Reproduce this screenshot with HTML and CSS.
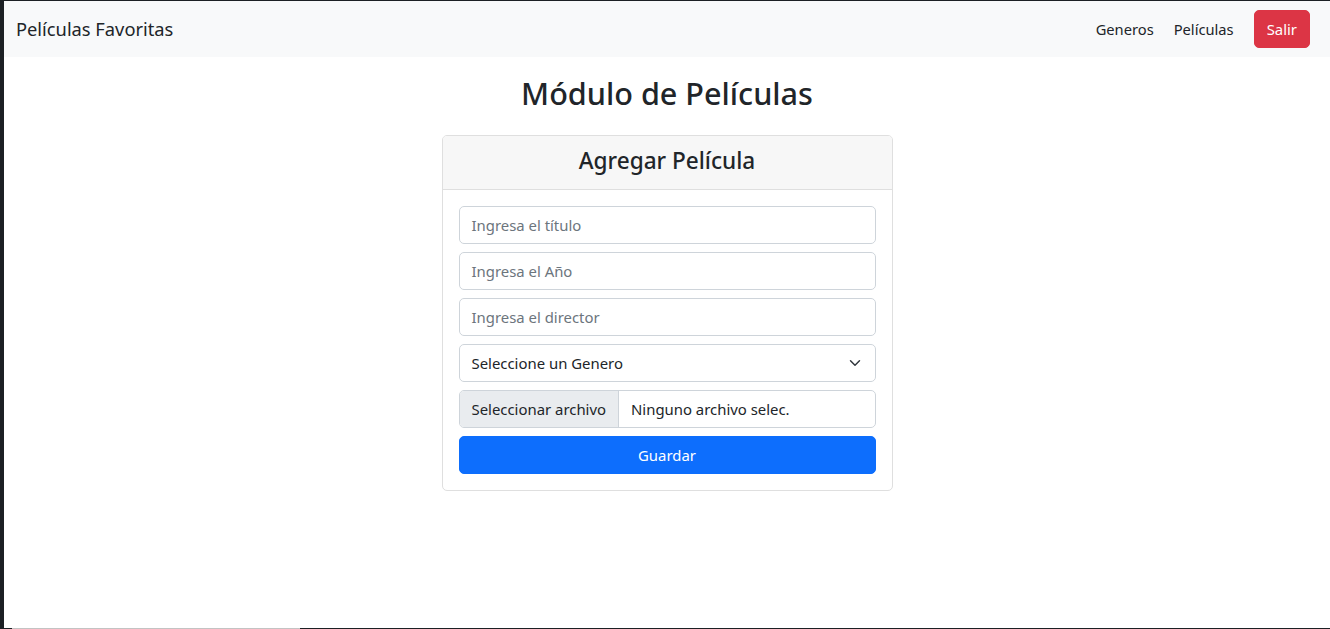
FILE: index.html
```html
<!DOCTYPE html>
<html lang="es">
<head>
<meta charset="utf-8">
<title>Películas Favoritas</title>
<link rel="stylesheet" href="styles.css">
</head>
<body>
<div class="frame">
  <div class="page">
    <nav class="navbar">
      <a class="brand" href="#">Películas Favoritas</a>
      <div class="nav-right">
        <a class="nav-link" href="#">Generos</a>
        <a class="nav-link" href="#">Películas</a>
        <button class="btn btn-danger" type="button">Salir</button>
      </div>
    </nav>
    <main class="main">
      <h2 class="title">Módulo de Películas</h2>
      <section class="card">
        <header class="card-header">
          <h4 class="card-title">Agregar Película</h4>
        </header>
        <div class="card-body">
          <div class="field placeholder">Ingresa el título</div>
          <div class="field placeholder">Ingresa el Año</div>
          <div class="field placeholder">Ingresa el director</div>
          <div class="field select">
            <span>Seleccione un Genero</span>
            <svg class="chevron" width="16" height="12" viewBox="0 0 16 16" aria-hidden="true"><path d="m2 5 6 6 6-6" fill="none" stroke="#343a40" stroke-width="2" stroke-linecap="round" stroke-linejoin="round"/></svg>
          </div>
          <div class="field file">
            <span class="file-btn">Seleccionar archivo</span>
            <span class="file-name">Ninguno archivo selec.</span>
          </div>
          <button class="btn btn-primary btn-block" type="button">Guardar</button>
        </div>
      </section>
    </main>
  </div>
  <div class="bottom-edge"><span class="edge-gray"></span></div>
</div>
</body>
</html>
```

FILE: styles.css
```css
* { box-sizing: border-box; }

html, body {
  margin: 0;
  height: 100%;
}

body {
  background: #1c2024;
  font-family: "Segoe UI", "Noto Sans", "Liberation Sans", sans-serif;
  color: #212529;
  font-size: 14.9px;
}

.frame {
  height: 629px;
  padding: 1px 0 0 4px;
  display: flex;
  flex-direction: column;
}

.page {
  flex: 1;
  background: #ffffff;
  display: flex;
  flex-direction: column;
}

.bottom-edge {
  height: 1px;
  margin-left: -4px;
  padding-left: 12px;
  display: flex;
}

.edge-gray {
  width: 288px;
  background: #c3c3c3;
}

.navbar {
  height: 56px;
  background: #f8f9fa;
  display: flex;
  align-items: center;
  justify-content: space-between;
  padding: 0 20px 0 12px;
}

.brand {
  font-size: 18.3px;
  color: #212529;
  text-decoration: none;
  line-height: 30px;
}

.nav-right {
  display: flex;
  align-items: center;
}

.nav-link {
  color: #212529;
  text-decoration: none;
  padding: 8px 10px;
  line-height: 24px;
  font-size: 14.7px;
}

.btn {
  font-family: inherit;
  font-size: 14.9px;
  line-height: 24px;
  border: 1px solid transparent;
  border-radius: 5px;
  padding: 6px 12px;
  color: #fff;
  cursor: pointer;
}

.btn-danger {
  background: #dc3545;
  border-color: #dc3545;
  margin-left: 10px;
  height: 38px;
}

.btn-primary {
  background: #0d6efd;
  border-color: #0d6efd;
}

.btn-block {
  display: block;
  width: 100%;
  height: 38px;
}

.main {
  display: flex;
  flex-direction: column;
  align-items: center;
}

.title {
  font-size: 30.6px;
  font-weight: 500;
  line-height: 38px;
  margin: 17px 0 23px;
}

.card {
  width: 451px;
  border: 1px solid #dfdfdf;
  border-radius: 5px;
  overflow: hidden;
}

.card-header {
  height: 54px;
  background: #f7f7f7;
  border-bottom: 1px solid #dfdfdf;
  display: flex;
  align-items: center;
  justify-content: center;
}

.card-title {
  margin: 0 0 5px;
  font-size: 22.6px;
  font-weight: 500;
  line-height: 29px;
}

.card-body {
  padding: 16px;
  display: flex;
  flex-direction: column;
  gap: 8px;
}

.field {
  height: 38px;
  border: 1px solid #ced4da;
  border-radius: 5px;
  padding: 6px 12px;
  line-height: 24px;
  display: flex;
  align-items: center;
  background: #fff;
}

.placeholder { color: #6c757d; }

.select { justify-content: space-between; }

.chevron { display: block; }

.file {
  padding: 0;
  overflow: hidden;
}

.file-btn {
  height: 100%;
  display: flex;
  align-items: center;
  padding: 0 12px;
  background: #e9ecef;
  border-right: 1px solid #ced4da;
}

.file-name {
  padding: 0 12px;
}
```
